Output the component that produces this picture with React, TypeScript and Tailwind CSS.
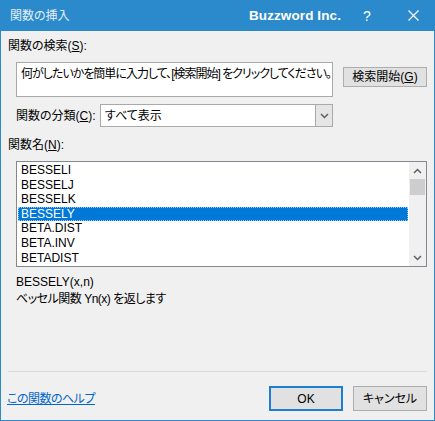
import React from "react";

const items = ["BESSELI", "BESSELJ", "BESSELK", "BESSELY", "BETA.DIST", "BETA.INV", "BETADIST"];

function Chevron({ up }: { up?: boolean }) {
  return (
    <svg width="9" height="6" viewBox="0 0 9 6" fill="none">
      <path
        d={up ? "M1 5L4.5 1.5L8 5" : "M1 1L4.5 4.5L8 1"}
        stroke="#606060"
        strokeWidth="1.5"
      />
    </svg>
  );
}

export default function App() {
  return (
    <div className="w-[435px] h-[421px] bg-[#f0f0f0] border-x border-b border-[#2b8acb] flex flex-col text-[12px] text-[#000] font-['Liberation_Sans','Noto_Sans_CJK_JP',sans-serif] [font-feature-settings:'palt'] leading-[16px]">
      {/* title bar */}
      <div className="h-[31px] -mx-px bg-[#2b8acb] flex items-center text-white shrink-0">
        <span className="ml-[10px] text-[12px] text-[#e6f0f9]">関数の挿入</span>
        <span className="ml-auto text-[13.5px] font-bold tracking-[0.1px]">Buzzword Inc.</span>
        <span className="ml-[22px] w-[8px] text-[14px]">?</span>
        <span className="ml-[37px] mr-[16px] flex items-center">
          <svg width="11" height="11" viewBox="0 0 11 11">
            <path d="M0.5 0.5L10.5 10.5M10.5 0.5L0.5 10.5" stroke="white" strokeWidth="1.2" />
          </svg>
        </span>
      </div>

      <div className="mt-[7px] ml-[7px]">
        関数の検索(<span className="underline">S</span>):
      </div>

      <div className="mt-[8px] ml-[15px] flex items-start">
        <div className="w-[317px] h-[35px] shrink-0 bg-white border border-[#a9a9a9] px-[4px] pt-[3px] whitespace-nowrap overflow-hidden tracking-[-1px]">
          何がしたいかを簡単に入力して、[検索開始] をクリックしてください。
        </div>
        <div className="ml-[10px] mt-[5px] w-[84px] h-[20px] shrink-0 bg-[#e1e1e1] border border-[#adadad] flex items-center justify-center">
          検索開始(<span className="underline">G</span>)
        </div>
      </div>

      <div className="mt-[7px] ml-[15px] flex items-center">
        <span className="w-[84px]">
          関数の分類(<span className="underline">C</span>):
        </span>
        <div className="w-[233px] h-[23px] bg-white border border-[#a9a9a9] flex items-center">
          <span className="ml-[4px]">すべて表示</span>
          <div className="ml-auto w-[17px] h-full bg-[#e5e5e5] border-l border-[#a9a9a9] flex items-center justify-center">
            <Chevron />
          </div>
        </div>
      </div>

      <div className="mt-[10px] ml-[7px]">
        関数名(<span className="underline">N</span>):
      </div>

      <div className="mt-[8px] ml-[15px] w-[411px] h-[106px] bg-white border border-[#828790] flex overflow-hidden">
        <div className="flex-1 pt-[1px] overflow-hidden">
          {items.map((it) =>
            it === "BESSELY" ? (
              <div
                key={it}
                className="mx-px h-[14.6px] leading-[13px] bg-[#0078d7] text-white border border-dotted border-[#9cc8ee] pl-[2px]"
              >
                {it}
              </div>
            ) : (
              <div key={it} className="mx-px h-[14.6px] leading-[14.6px] pl-[3px]">
                {it}
              </div>
            )
          )}
        </div>
        <div className="w-[17px] bg-[#f0f0f0] flex flex-col items-center">
          <div className="h-[17px] flex items-center justify-center">
            <Chevron up />
          </div>
          <div className="w-[15px] h-[16px] bg-[#cdcdcd]" />
          <div className="mt-auto h-[17px] flex items-center justify-center">
            <Chevron />
          </div>
        </div>
      </div>

      <div className="mt-[7px] ml-[15px]">BESSELY(x,n)</div>
      <div className="mt-[1px] ml-[15px] tracking-[-0.5px]">ベッセル関数 Yn(x) を返します</div>

      <div className="mt-auto ml-[7px] mr-[7px] h-px bg-[#d9d9d9]" />

      <div className="mt-[14px] mb-[9px] ml-[6px] mr-[7px] flex items-center">
        <span className="text-[#0066cc] underline tracking-[-0.5px]">この関数のヘルプ</span>
        <div className="ml-auto w-[74px] h-[25px] bg-[#e1e1e1] border-2 border-[#1f7fcf] flex items-center justify-center">
          OK
        </div>
        <div className="ml-[10px] w-[74px] h-[25px] bg-[#e1e1e1] border border-[#adadad] flex items-center justify-center">
          キャンセル
        </div>
      </div>
    </div>
  );
}
